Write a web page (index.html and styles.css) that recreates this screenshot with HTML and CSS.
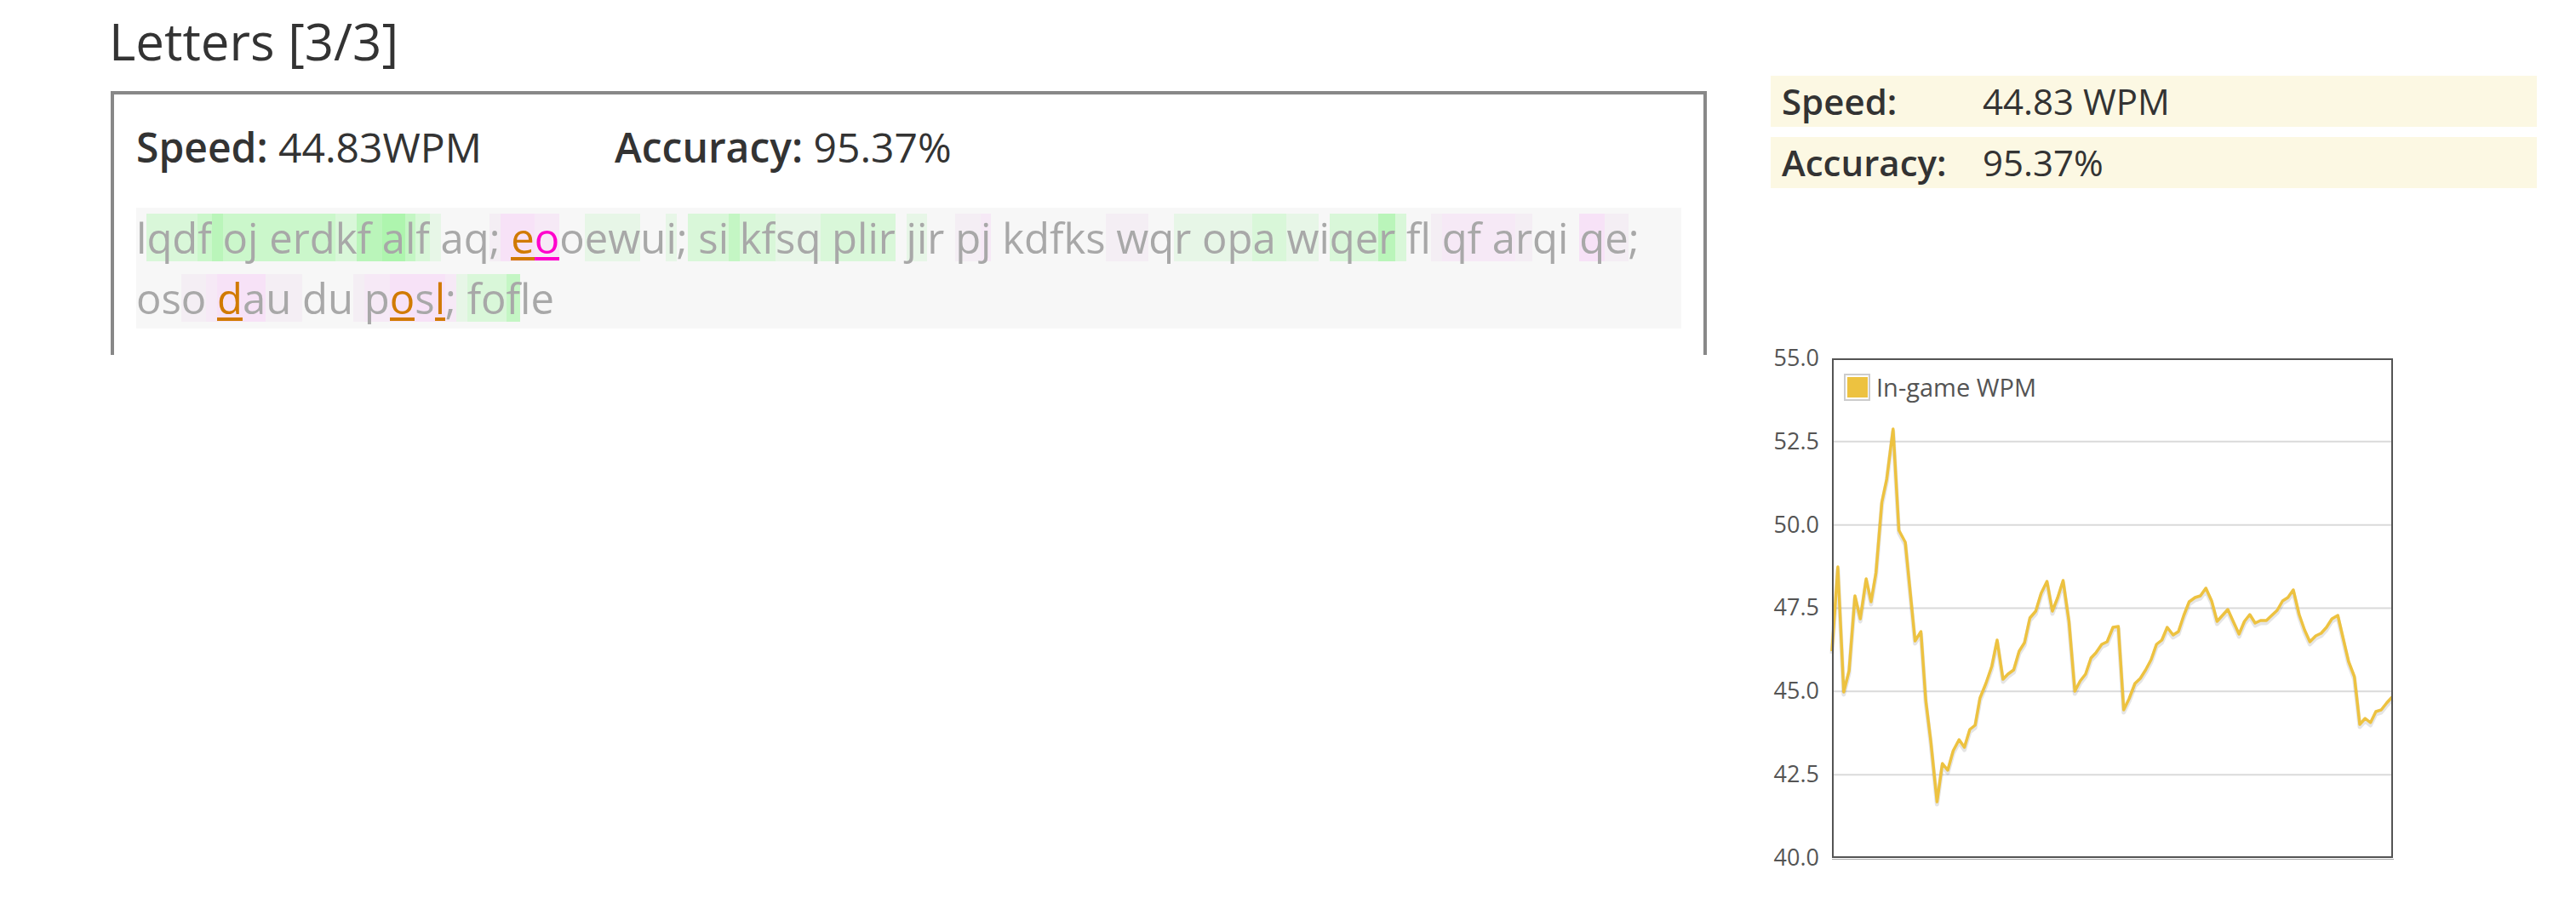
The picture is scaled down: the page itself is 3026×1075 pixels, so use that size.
FILE: index.html
```html
<!DOCTYPE html>
<html>
<head>
<meta charset="utf-8">
<link rel="stylesheet" href="styles.css">
</head>
<body>
<div class="page">
  <section class="main">
    <h1 class="title">Letters [3/3]</h1>
    <div class="panel">
      <div class="stats">
        <div class="stat stat-speed"><b>Speed:</b> 44.83WPM</div>
        <div class="stat"><b>Accuracy:</b> 95.37%</div>
      </div>
<div class="typed">l<span class="g5">qd</span><span class="g4">f</span><span class="g2"> </span><span class="g4">oj erd</span><span class="g5">k</span><span class="g2">f </span><span class="g1">a</span><span class="g3">l</span><span class="g5">f</span><span class="g6"> </span>aq<span class="p3">;</span><span class="p1"> </span><span class="p1 uo">e</span><span class="p2 um">o</span>o<span class="g6">ew</span>u<span class="g6">i</span>;<span class="g5"> si</span><span class="g3"> </span><span class="g5">kf</span><span class="g6">sq</span><span class="g5"> plir</span> <span class="g6">ji</span>r <span class="p3">p</span><span class="p2">j</span> kdfks<span class="p3"> w</span>q<span class="g6">r op</span><span class="g5">a </span><span class="g6">w</span>i<span class="g5">qe</span><span class="g2">r</span><span class="g5"> </span>fl<span class="p3"> </span><span class="p2">qf a</span><span class="p3">r</span>qi <span class="p1">q</span><span class="p3">e</span>;
os<span class="p3">o</span><span class="p2"> </span><span class="p1 uo">d</span><span class="p1">a</span><span class="p3">u </span>du<span class="p3"> </span><span class="p2">p</span><span class="p1 uo">o</span><span class="p1">s</span><span class="p1 uo">l</span><span class="p2">;</span><span class="g6"> </span><span class="g5">fo</span><span class="g3">f</span>le</div>
    </div>
  </section>
  <aside class="side">
    <div class="summary">
      <div class="row"><b>Speed:</b><span>44.83 WPM</span></div>
      <div class="row"><b>Accuracy:</b><span>95.37%</span></div>
    </div>
    <svg class="chart" width="740" height="630" viewBox="0 0 740 630">
      <g class="ylabels">
        <text x="57" y="30">55.0</text>
        <text x="57" y="128">52.5</text>
        <text x="57" y="226">50.0</text>
        <text x="57" y="323">47.5</text>
        <text x="57" y="421">45.0</text>
        <text x="57" y="519">42.5</text>
        <text x="57" y="617">40.0</text>
      </g>
      <g transform="translate(72,21)">
        <rect x="0" y="0" width="659" height="587" fill="#fff"/>
        <g stroke="#dadada" stroke-width="2">
          <line x1="0" y1="97.8" x2="659" y2="97.8"/>
          <line x1="0" y1="195.7" x2="659" y2="195.7"/>
          <line x1="0" y1="293.5" x2="659" y2="293.5"/>
          <line x1="0" y1="391.3" x2="659" y2="391.3"/>
          <line x1="0" y1="489.2" x2="659" y2="489.2"/>
        </g>
        <g fill="none" stroke-linejoin="round">
          <polyline transform="translate(0,3)" stroke="rgba(0,0,0,0.1)" stroke-width="5" points="0,344 6.9,245 13.8,392 20.1,367 27,279 33.3,306 40.2,259 45.9,286 51.7,252 58.6,169 64.3,142 71.8,83 78.6,202 86.1,216 97.6,332 104.5,321 110.2,402 116,449 123.4,521 129.7,476 136,484 142.4,461 149.3,448 155.6,457 161.9,436 168.2,431 173.9,399 180.8,382 187.7,362 194,331 200.9,377 206.7,371 213.5,366 219.9,344 226.2,334 232.5,305 239.4,297 245.7,276 252.6,262 258.9,297 265.2,281 271.5,261 278.4,309 285.3,391 291.6,379 297.9,371 304.3,352 310,346 316.9,336 323.2,333 330.1,316 336.4,315 342.7,413 349,400 355.9,382 362.2,376 368.5,366 374.9,354 381.2,336 387.5,331 393.8,316 400.7,325 407,321 413.3,302 419.6,286 426.5,281 432.8,279 439.2,270 446,285 452.4,309 458.7,302 465,295 471.3,309 478.2,324 484.5,309 490.8,301 497.1,311 503.4,308 510.3,308 516.6,302 523,296 529.3,285 535.6,281 541.9,272 548.8,301 555.1,319 561.4,333 568.3,326 574.6,323 580.9,316 587.3,306 594.2,302 600.5,329 606.8,356 613.7,374 620,430 626.3,423 632.6,428 638.9,415 645.2,413 651.5,405 657.9,398"/>
          <polyline stroke="#edc240" stroke-width="3.5" points="0,344 6.9,245 13.8,392 20.1,367 27,279 33.3,306 40.2,259 45.9,286 51.7,252 58.6,169 64.3,142 71.8,83 78.6,202 86.1,216 97.6,332 104.5,321 110.2,402 116,449 123.4,521 129.7,476 136,484 142.4,461 149.3,448 155.6,457 161.9,436 168.2,431 173.9,399 180.8,382 187.7,362 194,331 200.9,377 206.7,371 213.5,366 219.9,344 226.2,334 232.5,305 239.4,297 245.7,276 252.6,262 258.9,297 265.2,281 271.5,261 278.4,309 285.3,391 291.6,379 297.9,371 304.3,352 310,346 316.9,336 323.2,333 330.1,316 336.4,315 342.7,413 349,400 355.9,382 362.2,376 368.5,366 374.9,354 381.2,336 387.5,331 393.8,316 400.7,325 407,321 413.3,302 419.6,286 426.5,281 432.8,279 439.2,270 446,285 452.4,309 458.7,302 465,295 471.3,309 478.2,324 484.5,309 490.8,301 497.1,311 503.4,308 510.3,308 516.6,302 523,296 529.3,285 535.6,281 541.9,272 548.8,301 555.1,319 561.4,333 568.3,326 574.6,323 580.9,316 587.3,306 594.2,302 600.5,329 606.8,356 613.7,374 620,430 626.3,423 632.6,428 638.9,415 645.2,413 651.5,405 657.9,398"/>
        </g>
        <rect x="1" y="1" width="657" height="585" fill="none" stroke="#545454" stroke-width="2"/>
        <line x1="0" y1="588.5" x2="660" y2="588.5" stroke="#aaa" stroke-width="1"/>
        <rect x="15" y="19" width="29" height="30" fill="#fff" stroke="#ccc" stroke-width="2"/>
        <rect x="18" y="22" width="24" height="24" fill="#edc240"/>
        <text class="legend" x="52" y="45">In-game WPM</text>
      </g>
    </svg>
  </aside>
</div>
</body>
</html>
```

FILE: styles.css
```css
body {
  margin: 0;
  font-family: "Open Sans", "Liberation Sans", sans-serif;
  color: #333;
  background: #fff;
}

.page {
  display: flex;
  align-items: flex-start;
  padding-left: 130px;
  gap: 75px;
}

.main {
  width: 1875px;
  flex: none;
}

.title {
  margin: 8px 0 0 -2px;
  font-size: 60px;
  line-height: 80px;
  font-weight: 400;
  color: #333;
}

.panel {
  margin-top: 19px;
  height: 310px;
  box-sizing: border-box;
  border: 4px solid #888;
  border-bottom: 0;
  padding: 30px 26px 0 26px;
}

.stats {
  display: flex;
  font-size: 48px;
  line-height: 64px;
  color: #333;
}

.stats b {
  font-weight: 600;
}

.stat-speed {
  width: 562px;
}

.typed {
  margin-top: 39px;
  height: 142px;
  background: #f7f7f7;
  font-size: 49px;
  line-height: 71px;
  color: #a8a8a8;
  white-space: pre;
}

.typed span {
  display: inline-block;
  line-height: 56px;
}

.g1 { background-color: #aef5ae; }
.g2 { background-color: #baf5ba; }
.g3 { background-color: #c4f6c4; }
.g4 { background-color: #cbf7cb; }
.g5 { background-color: #d9f7d9; }
.g6 { background-color: #e7f6e7; }
.p1 { background-color: #f7e2f7; }
.p2 { background-color: #f6e9f6; }
.p3 { background-color: #f4eef4; }

.uo {
  color: #d17a00;
  background-image: linear-gradient(#d17a00, #d17a00);
  background-size: 100% 4px;
  background-position: 0 calc(100% - 1px);
  background-repeat: no-repeat;
}

.um {
  color: #ff00cc;
  background-image: linear-gradient(#ff00cc, #ff00cc);
  background-size: 100% 4px;
  background-position: 0 calc(100% - 1px);
  background-repeat: no-repeat;
}

.side {
  width: 900px;
  flex: none;
}

.summary {
  margin-top: 89px;
  display: flex;
  flex-direction: column;
  gap: 12px;
}

.row {
  display: grid;
  grid-template-columns: 236px 1fr;
  height: 60px;
  padding-left: 13px;
  background: #fcf8e3;
  font-size: 42px;
  line-height: 60px;
  color: #333;
}

.row b {
  font-weight: 600;
}

.chart {
  display: block;
  margin-top: 179px;
  font-family: "Open Sans", "Liberation Sans", sans-serif;
}

.ylabels text {
  font-size: 27px;
  fill: #545454;
  text-anchor: end;
}

.legend {
  font-size: 29px;
  fill: #545454;
}
```
